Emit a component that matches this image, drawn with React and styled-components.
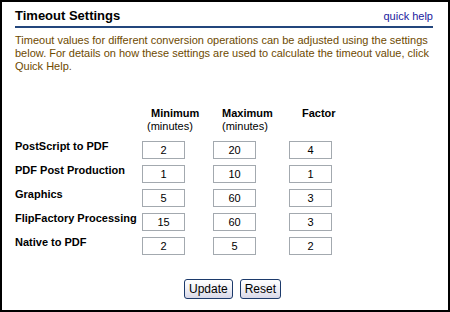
import React from "react";
import styled, { createGlobalStyle } from "styled-components";

const GlobalStyle = createGlobalStyle`
  html, body {
    margin: 0;
    padding: 0;
    background: #ffffff;
  }
  body {
    font-family: "Liberation Sans", Arial, sans-serif;
  }
`;

const Panel = styled.div`
  width: 450px;
  height: 312px;
  box-sizing: border-box;
  border: 2px solid #000000;
  padding: 0 15px 0 13px;
  background: #ffffff;
  font-family: "Liberation Sans", Arial, sans-serif;
`;

const TitleBar = styled.div`
  display: flex;
  justify-content: space-between;
  align-items: baseline;
  padding-top: 6px;
  padding-bottom: 2px;
  border-bottom: 2px solid #23467c;
`;

const Title = styled.h1`
  margin: 0;
  font-size: 13px;
  line-height: 16px;
  font-weight: bold;
  color: #000000;
`;

const HelpLink = styled.a`
  font-size: 11px;
  line-height: 16px;
  color: #1b1b9e;
  text-decoration: none;
  cursor: pointer;
`;

const Intro = styled.p`
  margin: 6px 0 0;
  font-size: 11px;
  line-height: 13px;
  color: #6e4a00;
`;

const Settings = styled.div`
  display: grid;
  grid-template-columns: 127px 71px 76px 58px;
  grid-template-rows: 34px;
  grid-auto-rows: 24px;
  margin-top: 34px;
  font-size: 11px;
  line-height: 13px;
`;

const HeaderRow = styled.div`
  display: contents;
`;

const HeaderCell = styled.div`
  padding-left: ${(p) => p.$indent || 0}px;
`;

const HeaderTitle = styled.div`
  font-weight: bold;
  color: #000000;
`;

const HeaderSub = styled.div`
  margin-left: ${(p) => p.$shift || 0}px;
  color: #000000;
`;

const RowLabel = styled.div`
  font-weight: bold;
  color: #000000;
  line-height: 11px;
  white-space: nowrap;
`;

const ValueCell = styled.div`
  display: flex;
  align-items: flex-start;
`;

const ValueInput = styled.input`
  width: 43px;
  height: 18px;
  box-sizing: border-box;
  margin: 0;
  padding: 0 2px;
  border: 1px solid #a3a9af;
  background: #ffffff;
  font-family: "Liberation Sans", Arial, sans-serif;
  font-size: 11px;
  color: #000000;
  text-align: center;
  outline: none;
`;

const Actions = styled.div`
  display: flex;
  justify-content: center;
  gap: 7px;
  margin-top: 18px;
  padding-left: 17px;
`;

const Button = styled.button`
  height: 20px;
  box-sizing: border-box;
  padding: 0 4px;
  border: 1px solid #1c3a6b;
  border-radius: 3px;
  background: linear-gradient(#ffffff, #f2f2f7 45%, #d8d8e8);
  font-family: "Liberation Sans", Arial, sans-serif;
  font-size: 12px;
  color: #000000;
  cursor: pointer;
`;

const columns = [
  { title: "Minimum", sub: "(minutes)", indent: 9, shift: -4 },
  { title: "Maximum", sub: "(minutes)", indent: 9, shift: 0 },
  { title: "Factor", indent: 13 },
];

const rows = [
  { name: "PostScript to PDF", values: [2, 20, 4] },
  { name: "PDF Post Production", values: [1, 10, 1] },
  { name: "Graphics", values: [5, 60, 3] },
  { name: "FlipFactory Processing", values: [15, 60, 3] },
  { name: "Native to PDF", values: [2, 5, 2] },
];

export default function App() {
  return (
    <>
      <GlobalStyle />
      <Panel>
        <TitleBar>
          <Title>Timeout Settings</Title>
          <HelpLink>quick help</HelpLink>
        </TitleBar>
        <Intro>
          Timeout values for different conversion operations can be adjusted
          using the settings below. For details on how these settings are used
          to calculate the timeout value, click Quick Help.
        </Intro>
        <Settings>
          <HeaderRow>
            <HeaderCell />
            {columns.map((c) => (
              <HeaderCell key={c.title} $indent={c.indent}>
                <HeaderTitle>{c.title}</HeaderTitle>
                {c.sub && <HeaderSub $shift={c.shift}>{c.sub}</HeaderSub>}
              </HeaderCell>
            ))}
          </HeaderRow>
          {rows.map((r) => (
            <React.Fragment key={r.name}>
              <RowLabel>{r.name}</RowLabel>
              {r.values.map((v, i) => (
                <ValueCell key={i}>
                  <ValueInput type="text" defaultValue={v} />
                </ValueCell>
              ))}
            </React.Fragment>
          ))}
        </Settings>
        <Actions>
          <Button>Update</Button>
          <Button>Reset</Button>
        </Actions>
      </Panel>
    </>
  );
}
